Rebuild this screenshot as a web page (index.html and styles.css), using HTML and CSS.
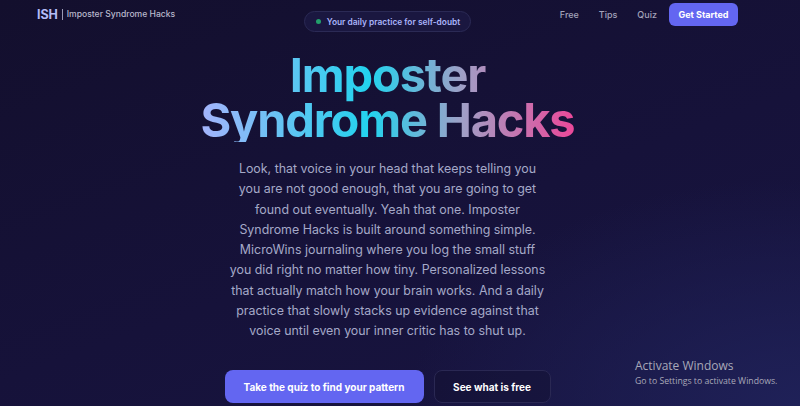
FILE: index.html
```html
<!DOCTYPE html>
<html lang="en">
<head>
    <meta charset="utf-8">
    <title>Imposter Syndrome Hacks</title>
    <link rel="stylesheet" href="styles.css">
</head>
<body>
    <div class="page">
        <header class="topbar">
            <a class="brand" href="#">
                <span class="brand-mark">ISH</span>
                <span class="brand-name">Imposter Syndrome Hacks</span>
            </a>
            <nav class="menu">
                <div class="menu-links">
                    <a href="#">Free</a>
                    <a href="#">Tips</a>
                    <a href="#">Quiz</a>
                </div>
                <a class="btn btn-small" href="#">Get Started</a>
            </nav>
        </header>

        <main class="hero">
            <div class="pill"><span class="pill-dot"></span>Your daily practice for self-doubt</div>
            <h1 class="hero-title">Imposter<br>Syndrome Hacks</h1>
            <p class="hero-copy">Look, that voice in your head that keeps telling you you are not good enough, that you are going to get found out eventually. Yeah that one. Imposter Syndrome Hacks is built around something simple. MicroWins journaling where you log the small stuff you did right no matter how tiny. Personalized lessons that actually match how your brain works. And a daily practice that slowly stacks up evidence against that voice until even your inner critic has to shut up.</p>
            <div class="hero-actions">
                <a class="btn btn-primary" href="#">Take the quiz to find your pattern</a>
                <a class="btn btn-ghost" href="#">See what is free</a>
            </div>
        </main>
    </div>

    <div class="activation">
        <div class="activation-title">Activate Windows</div>
        <div class="activation-note">Go to Settings to activate Windows.</div>
    </div>
</body>
</html>
```

FILE: styles.css
```css
html, body {
    margin: 0;
    padding: 0;
    height: 100%;
}
body {
    font-family: Inter, "Noto Sans", sans-serif;
    color: #e6e6f2;
    background-color: #16123a;
    background-image:
        radial-gradient(ellipse 70% 80% at 100% 100%, #1f2158 0%, rgba(31, 33, 88, 0) 70%),
        linear-gradient(160deg, #130f2d 0%, #16123a 55%, #181542 100%);
    overflow: hidden;
    position: relative;
}
a {
    color: inherit;
    text-decoration: none;
}
.page {
    width: 775px;
    position: relative;
}

/* top navigation sits over the hero */
.topbar {
    position: absolute;
    top: 0;
    left: 0;
    right: 0;
    display: flex;
    align-items: center;
    justify-content: space-between;
    padding: 3px 37px 0 37px;
    height: 23px;
    z-index: 2;
}
.brand {
    display: flex;
    align-items: center;
    gap: 4px;
}
.brand-mark {
    font-size: 12.5px;
    font-weight: 700;
    color: #b4bcf7;
    letter-spacing: -0.01em;
}
.brand-name {
    font-size: 8.6px;
    font-weight: 500;
    color: #b9b9cc;
    border-left: 1px solid #9a9ab4;
    padding-left: 4px;
    line-height: 11px;
}
.menu {
    display: flex;
    align-items: center;
    gap: 12px;
}
.menu-links {
    display: flex;
    gap: 20px;
    font-size: 9px;
    font-weight: 500;
    color: #a3a3b9;
}

.btn {
    display: inline-flex;
    align-items: center;
    justify-content: center;
    font-weight: 700;
    color: #ffffff;
    border-radius: 8px;
    box-sizing: border-box;
}
.btn-small {
    height: 23px;
    width: 69px;
    font-size: 9px;
    border-radius: 6px;
    background: #6366f1;
}
.btn-primary {
    height: 33px;
    width: 199px;
    font-size: 10px;
    background: #6366f1;
}
.btn-ghost {
    height: 33px;
    width: 117px;
    font-size: 10px;
    border: 1px solid #2a2853;
    background: rgba(18, 15, 44, 0.35);
}

/* hero */
.hero {
    display: flex;
    flex-direction: column;
    align-items: center;
    text-align: center;
    padding-top: 11px;
}
.pill {
    display: flex;
    align-items: center;
    gap: 6px;
    height: 21px;
    box-sizing: border-box;
    padding: 0 10px 0 11px;
    border: 1px solid #2b2a55;
    border-radius: 999px;
    background: #1a1740;
    font-size: 8.4px;
    font-weight: 600;
    color: #aab4fb;
}
.pill-dot {
    width: 5px;
    height: 5px;
    border-radius: 50%;
    background: #22a06b;
}
.hero-title {
    display: inline-block;
    margin: 20px 0 0;
    font-size: 47px;
    line-height: 45px;
    font-weight: 700;
    letter-spacing: -0.025em;
    background: linear-gradient(90deg, #a5b4fc 0%, #5bc6f2 25%, #22d3ee 45%, #a09fc6 70%, #ec4899 100%);
    -webkit-background-clip: text;
    background-clip: text;
    color: transparent;
}
.hero-copy {
    margin: 17px 0 0;
    max-width: 319px;
    font-size: 12.4px;
    line-height: 20.25px;
    color: #a5a9c8;
}
.hero-actions {
    display: flex;
    gap: 10px;
    margin-top: 29px;
}

/* OS watermark in the corner */
.activation {
    position: absolute;
    left: 635px;
    top: 358px;
    font-family: "Open Sans", "Liberation Sans", sans-serif;
    color: #a8a8b8;
}
.activation-title {
    font-size: 12px;
    line-height: 16px;
}
.activation-note {
    font-size: 8.7px;
    line-height: 14px;
}
```
